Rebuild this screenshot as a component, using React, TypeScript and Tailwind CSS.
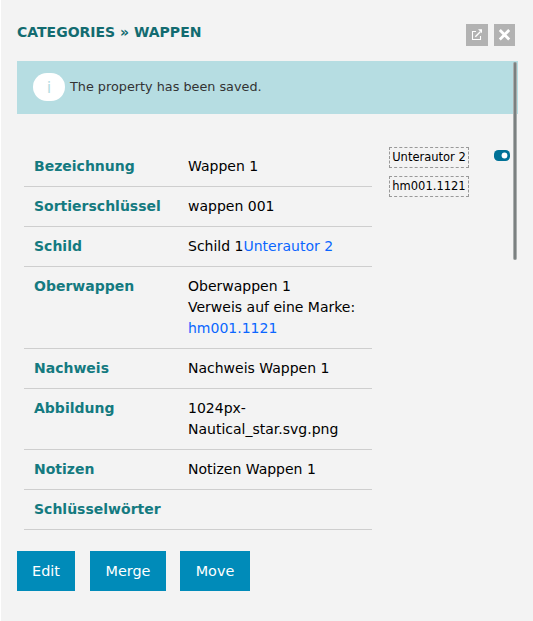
import React from "react";

type Row = { label: string; value: React.ReactNode };

const Link = ({ children }: { children: React.ReactNode }) => (
  <a className="text-[#0a66ff]">{children}</a>
);

const rows: Row[] = [
  { label: "Bezeichnung", value: "Wappen 1" },
  { label: "Sortierschlüssel", value: "wappen 001" },
  { label: "Schild", value: <>Schild 1<Link>Unterautor 2</Link></> },
  {
    label: "Oberwappen",
    value: <>Oberwappen 1<br />Verweis auf eine Marke:<br /><Link>hm001.1121</Link></>,
  },
  { label: "Nachweis", value: "Nachweis Wappen 1" },
  { label: "Abbildung", value: <>1024px-<br />Nautical_star.svg.png</> },
  { label: "Notizen", value: "Notizen Wappen 1" },
  { label: "Schlüsselwörter", value: "" },
];

const Tag = ({ children }: { children: React.ReactNode }) => (
  <span className="flex h-[21px] w-20 items-center justify-center whitespace-nowrap border border-dashed border-[#999] text-[11.5px] leading-[19px] text-black">
    {children}
  </span>
);

const actionClass =
  "flex h-10 items-center justify-center bg-[#008bb9] text-[14.4px] text-white";

export default function App() {
  return (
    <main className="relative h-[621px] w-[533px] overflow-hidden border-l border-white bg-[#f3f3f3] pl-4 font-['DejaVu_Sans',sans-serif] text-[14px] leading-[21px] text-black">
      <header className="flex h-[61px] items-start justify-between pr-[18px]">
        <h1 className="pt-[22px] text-[14px] font-bold text-[#126b70]">CATEGORIES » WAPPEN</h1>
        <div className="flex gap-1.5 pt-6">
          <button className="flex h-[22px] w-[22px] items-center justify-center bg-[#b2b2b2]" aria-label="Open">
            <svg width="22" height="22" viewBox="0 0 22 22" fill="none" stroke="white">
              <path d="M10 7.5H6.5v8h8v-3.5" strokeWidth="1.1" />
              <path d="M9.3 12.7l5-5" strokeWidth="1.4" />
              <path d="M12 5.2h4v4z" fill="white" stroke="none" />
            </svg>
          </button>
          <button className="flex h-[22px] w-[21px] items-center justify-center bg-[#b2b2b2]" aria-label="Close">
            <svg width="21" height="22" viewBox="0 0 21 22" fill="none" stroke="white" strokeWidth="2.8">
              <path d="M5.8 6l9.4 9.4M15.2 6l-9.4 9.4" />
            </svg>
          </button>
        </div>
      </header>

      <div className="flex h-[53px] w-[501px] items-start gap-[5px] bg-[#b6dde2] pl-4 pt-3 text-[12.8px] text-[#333]">
        <span className="flex h-7 w-8 items-center justify-center rounded-[14px] bg-white text-[16px] text-[#b6dde2]">i</span>
        <span className="pt-[3px]">The property has been saved.</span>
      </div>

      <div className="flex pt-[33px]">
        <dl className="ml-[7px] w-[348px]">
          {rows.map((row) => (
            <div key={row.label} className="flex border-b border-[#cecece] px-2.5 py-[9px]">
              <dt className="w-[154px] font-bold text-[#147a80]">{row.label}</dt>
              <dd>{row.value}</dd>
            </div>
          ))}
        </dl>
        <div className="ml-[17px] flex flex-col gap-2">
          <Tag>Unterautor 2</Tag>
          <Tag>hm001.1121</Tag>
        </div>
        <svg className="ml-[25px] mt-[3px]" width="16" height="11" viewBox="0 0 16 11">
          <rect width="16" height="11" rx="4.5" fill="#007196" />
          <circle cx="10.5" cy="5.5" r="2.9" fill="white" />
        </svg>
      </div>

      <footer className="flex pt-[21px]">
        <button className={`${actionClass} w-[58px]`}>Edit</button>
        <button className={`${actionClass} ml-[15px] w-[76px]`}>Merge</button>
        <button className={`${actionClass} ml-3.5 w-[70px]`}>Move</button>
      </footer>

      <div className="absolute left-[512px] top-[62px] h-[198px] w-1 rounded-full border-x border-[#a9adad] bg-[#7b8080]" />
    </main>
  );
}
